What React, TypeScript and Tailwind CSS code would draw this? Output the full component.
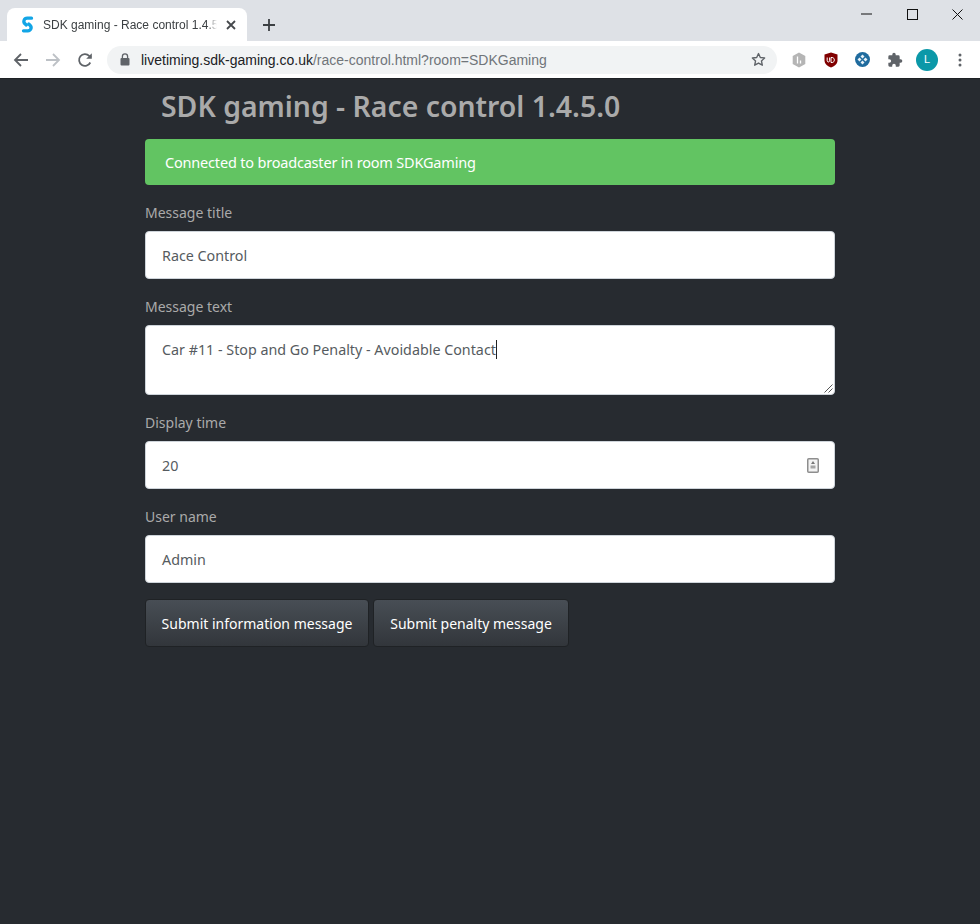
import React from "react";

function Field({ label, children }: { label: string; children: React.ReactNode }) {
  return (
    <div className="mb-[16px]">
      <label className="block h-[24px] mb-[6px] text-[14px] leading-[24px] text-[#aaaaaa]">{label}</label>
      {children}
    </div>
  );
}

const inputCls =
  "h-[48px] w-full bg-white rounded-[4px] border border-[#ced4da] px-[16px] flex items-center text-[14.3px] text-[#565b60]";

const buttonCls =
  "h-[48px] rounded-[4px] border border-[#1f2225] bg-gradient-to-b from-[#484e55] to-[#32363b] text-[14px] text-white";

export default function App() {
  return (
    <div className="w-[980px] h-[924px] flex flex-col overflow-hidden bg-[#272b30] font-['Noto_Sans','Open_Sans',sans-serif]">
      {/* tab strip */}
      <div className="h-[41px] shrink-0 bg-[#dee1e6] flex items-end pl-[7px] relative">
        <div className="w-[240px] h-[33px] bg-white rounded-t-[8px] flex items-center pl-[14px] pr-[10px] gap-[9px] font-['Liberation_Sans',sans-serif]">
          <svg width="13" height="17" viewBox="0 0 13 17" className="shrink-0">
            <path d="M10.500 2.200H6.200C3 2.200 1.800 5.700 4 7.800L5.300 9" fill="none" stroke="#12a5e6" strokeWidth="3.300" strokeLinecap="round" />
            <path d="M2.500 14.800H6.800C10 14.800 11.200 11.300 9 9.200L7.700 8" fill="none" stroke="#12a5e6" strokeWidth="3.300" strokeLinecap="round" />
          </svg>
          <span className="flex-1 pt-[1px] overflow-hidden whitespace-nowrap text-[12px] text-[#3c4043] [mask-image:linear-gradient(to_left,transparent,black_10px)]">
            SDK gaming - Race control 1.4.5.0
          </span>
          <svg width="10" height="10" viewBox="0 0 10 10" className="shrink-0 mr-[1px]">
            <path d="M1 1l8 8M9 1l-8 8" stroke="#45484c" strokeWidth="1.800" />
          </svg>
        </div>
        <svg width="12" height="12" viewBox="0 0 12 12" className="ml-[16px] mb-[10px]">
          <path d="M6 0v12M0 6h12" stroke="#3c4043" strokeWidth="1.800" />
        </svg>
        <svg width="11" height="2" viewBox="0 0 11 2" className="absolute left-[861px] top-[13px]">
          <path d="M0 1h11" stroke="#111" strokeWidth="1" />
        </svg>
        <svg width="11" height="11" viewBox="0 0 11 11" className="absolute left-[907px] top-[9px]">
          <rect x="0.500" y="0.500" width="10" height="10" fill="none" stroke="#111" strokeWidth="1" />
        </svg>
        <svg width="11" height="11" viewBox="0 0 11 11" className="absolute left-[952px] top-[9px]">
          <path d="M0.500 0.500l10 10M10.500 0.500l-10 10" stroke="#111" strokeWidth="1" />
        </svg>
      </div>
      {/* toolbar */}
      <div className="h-[37px] shrink-0 bg-white flex items-center font-['Liberation_Sans',sans-serif]">
        <svg width="16" height="16" viewBox="0 0 16 16" className="ml-[13px]">
          <path d="M15 8H2M8 2L2 8l6 6" fill="none" stroke="#5f6368" strokeWidth="1.800" />
        </svg>
        <svg width="16" height="16" viewBox="0 0 16 16" className="ml-[16px]">
          <path d="M1 8h13M8 2l6 6-6 6" fill="none" stroke="#bdc1c6" strokeWidth="1.800" />
        </svg>
        <svg width="16" height="16" viewBox="0 0 16 16" className="ml-[16px]">
          <path d="M13.300 10.500A5.900 5.900 0 1 1 12.200 3.800L14 5.400" fill="none" stroke="#5f6368" strokeWidth="1.800" />
          <path d="M14.800 1.200v5.600H9.200z" fill="#5f6368" />
        </svg>
        <div className="ml-[14px] w-[670px] h-[28px] rounded-[14px] bg-[#f1f3f4] flex items-center pl-[13px] pr-[11px]">
          <svg width="10" height="13" viewBox="0 0 10 13" className="shrink-0">
            <path d="M2.400 5V3.400a2.600 2.600 0 0 1 5.200 0V5" fill="none" stroke="#5f6368" strokeWidth="1.300" />
            <rect x="0.500" y="5" width="9" height="7.500" rx="1" fill="#5f6368" />
          </svg>
          <span className="ml-[11px] pt-[2px] flex-1 whitespace-nowrap text-[14px] text-[#70757a]">
            <span className="text-[#202124]">livetiming.sdk-gaming.co.uk</span>/race-control.html?room=SDKGaming
          </span>
          <svg width="15" height="15" viewBox="0 0 24 24" className="shrink-0">
            <path d="M12 2.500l2.900 6.300 6.900.8-5.100 4.700 1.400 6.800-6.100-3.400-6.100 3.400 1.400-6.800-5.100-4.700 6.900-.8z" fill="none" stroke="#5f6368" strokeWidth="2.200" strokeLinejoin="round" />
          </svg>
        </div>
        <svg width="14" height="16" viewBox="0 0 14 16" className="ml-[15px]">
          <path d="M7 0.500l6.300 3.600v7.800L7 15.500.7 11.900V4.100z" fill="#b5b5b5" />
          <path d="M5.500 4.500v7M8.500 8.500v3" fill="none" stroke="#fff" strokeWidth="1.300" />
        </svg>
        <svg width="14" height="16" viewBox="0 0 14 16" className="ml-[18px]">
          <path d="M7 0.500L13.500 2.500V8.500C13.500 12 10 14.500 7 15.500C4 14.500 .5 12 .5 8.500V2.500Z" fill="#800000" />
          <path d="M3.200 5.500v3.300c0 1.600 2.400 1.600 2.400 0V5.500M7 5.500v5h1.200c2.800 0 2.800-5 0-5z" fill="none" stroke="#fff" strokeWidth="1" />
        </svg>
        <svg width="15" height="15" viewBox="0 0 15 15" className="ml-[17px]">
          <circle cx="7.500" cy="7.500" r="7.500" fill="#1f6b9e" />
          <path d="M7.500 2.500l2 2-2 2-2-2zM7.500 8.500l2 2-2 2-2-2zM2.500 7.500l2-2 2 2-2 2zM8.500 7.500l2-2 2 2-2 2z" fill="#e8f2f8" />
        </svg>
        <svg width="16" height="16" viewBox="0 0 24 24" className="ml-[17px]">
          <path d="M20.500 11H19V7a2 2 0 0 0-2-2h-4V3.500a2.500 2.500 0 0 0-5 0V5H4a2 2 0 0 0-2 2v3.800h1.500a2.700 2.700 0 0 1 0 5.400H2V20a2 2 0 0 0 2 2h3.800v-1.500a2.700 2.700 0 0 1 5.400 0V22H17a2 2 0 0 0 2-2v-4h1.500a2.500 2.500 0 0 0 0-5z" fill="#5f6368" />
        </svg>
        <div className="ml-[13px] w-[22px] h-[22px] rounded-full bg-[#0b98a8] flex items-center justify-center text-[11px] text-white">L</div>
        <svg width="4" height="14" viewBox="0 0 4 14" className="ml-[20px]">
          <circle cx="2" cy="2" r="1.500" fill="#5f6368" />
          <circle cx="2" cy="7" r="1.500" fill="#5f6368" />
          <circle cx="2" cy="12" r="1.500" fill="#5f6368" />
        </svg>
      </div>
      {/* page */}
      <div className="flex-1 border-t border-[#1e2125] flex justify-center">
        <div className="w-[690px]">
          <h1 className="h-[60px] pl-[16px] text-[28.400px] leading-[54px] font-semibold text-[#aaaaaa]">
            SDK gaming - Race control 1.4.5.0
          </h1>
          <div className="h-[46px] mb-[16px] rounded-[4px] bg-[#62c462] pl-[20px] pt-[2px] flex items-center text-[14.500px] tracking-[-0.19px] text-white">
            Connected to broadcaster in room SDKGaming
          </div>
          <Field label="Message title">
            <div className={inputCls}><span className="pt-[2px]">Race Control</span></div>
          </Field>
          <Field label="Message text">
            <div className="relative h-[70px] w-full bg-white rounded-[4px] border border-[#ced4da] px-[16px] pt-[12px] text-[14.300px] leading-[24px] text-[#565b60]">
              <span className="border-r border-[#222]">Car #11 - Stop and Go Penalty - Avoidable Contact</span>
              <svg width="9" height="9" viewBox="0 0 9 9" className="absolute right-[1px] bottom-[1px]">
                <path d="M8.500 0.500l-8 8M8.500 4.500l-4 4" stroke="#555" strokeWidth="1" />
              </svg>
            </div>
          </Field>
          <Field label="Display time">
            <div className={inputCls + " justify-between"}>
              <span className="pt-[2px]">20</span>
              <svg width="12" height="15" viewBox="0 0 12 15" className="mr-[-1px]">
                <rect x="0.750" y="0.750" width="10.500" height="13.500" rx="1" fill="#f3f3f3" stroke="#8e8e8e" strokeWidth="1.500" />
                <path d="M6 3l2 3H4z" fill="#777" />
                <path d="M3.500 7.500h5v3h-5z" fill="#a5a5a5" />
              </svg>
            </div>
          </Field>
          <Field label="User name">
            <div className={inputCls}><span className="pt-[2px]">Admin</span></div>
          </Field>
          <div className="flex gap-[4px]">
            <button className={buttonCls + " w-[224px]"}>Submit information message</button>
            <button className={buttonCls + " w-[196px]"}>Submit penalty message</button>
          </div>
        </div>
      </div>
    </div>
  );
}
